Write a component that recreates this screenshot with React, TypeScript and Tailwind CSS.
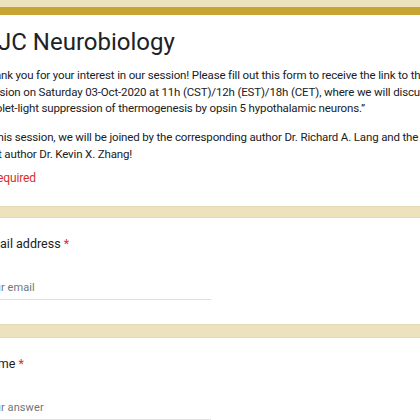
import React from 'react';

const Question: React.FC<{ label: string; placeholder: string }> = ({ label, placeholder }) => (
  <div className="bg-white rounded-lg border border-[#e6dcb8] pl-[18px] pt-[17px] pb-[24px]">
    <div className="text-[12.5px] leading-[18px] text-[#202124]">
      {label} <span className="text-[#d93025]">*</span>
    </div>
    <div className="mt-[27px] w-[229px] border-b border-[#e0e0e0] pb-[3px] text-[11px] leading-[16px] text-[#70757a] tracking-[0.1px]">
      {placeholder}
    </div>
  </div>
);

const App: React.FC = () => {
  return (
    <div className="w-[420px] h-[420px] overflow-hidden bg-[#ece2bd] font-['Roboto',sans-serif]">
      <div className="-ml-[37px] w-[640px] pt-[7px] flex flex-col">
        <div className="rounded-lg overflow-hidden bg-white border-x border-b border-[#e6dcb8]">
          <div className="h-[8px] bg-[#c8a533]" />
          <div className="pl-[18px] pt-[11px] pb-[19px] text-[#202124]">
            <h1 className="ml-[16px] text-[24px] leading-[32px] font-normal">JC Neurobiology</h1>
            <div className="mt-[9px] text-[11.5px] leading-[16.5px] tracking-[-0.15px] whitespace-nowrap">
              <p>
                Thank you for your interest in our session! Please fill out this form to receive the link to the
                <br />
                session on Saturday 03-Oct-2020 at 11h (CST)/12h (EST)/18h (CET), where we will discuss
                <br />
                “Violet-light suppression of thermogenesis by opsin 5 hypothalamic neurons.”
              </p>
              <p className="mt-[12.5px]">
                In this session, we will be joined by the corresponding author Dr. Richard A. Lang and the
                <br />
                first author Dr. Kevin X. Zhang!
              </p>
              <p className="mt-[8px] text-[12px] text-[#d93025]">* Required</p>
            </div>
          </div>
        </div>
        <div className="mt-[10.5px]">
          <Question label="Email address" placeholder="Your email" />
        </div>
        <div className="mt-[12px]">
          <Question label="Name" placeholder="Your answer" />
        </div>
      </div>
    </div>
  );
};

export default App;
